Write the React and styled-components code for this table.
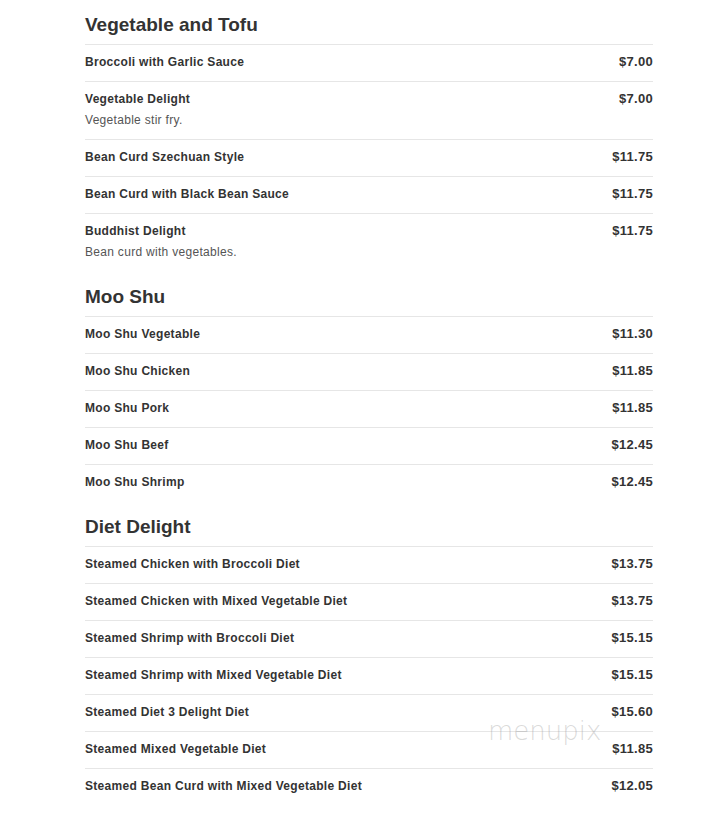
import React from "react";
import styled, { createGlobalStyle } from "styled-components";

const Global = createGlobalStyle`
  html, body { margin: 0; padding: 0; background: #fff; }
  body { font-family: "Liberation Sans", Arial, sans-serif; color: #333; }
`;

const Page = styled.div`
  position: relative;
  width: 721px;
  min-height: 815px;
  box-sizing: border-box;
  padding: 0 68px 12px 85px;
`;

const Section = styled.section`
  display: flex;
  flex-direction: column;
`;

const Heading = styled.h2`
  margin: 0;
  padding: ${(p) => (p.$first ? "14px" : "15px")} 0 0;
  height: ${(p) => (p.$first ? "30px" : "30px")};
  font-size: 19px;
  line-height: 22px;
  font-weight: bold;
  color: #333;
  border-bottom: 1px solid #e6e6e6;
`;

const Row = styled.div`
  display: flex;
  justify-content: space-between;
  align-items: flex-start;
  padding: 10px 0 12px 0;
  border-bottom: ${(p) => (p.$last ? "none" : "1px solid #e6e6e6")};
`;

const Info = styled.div`
  display: flex;
  flex-direction: column;
  gap: 7px;
`;

const Name = styled.div`
  font-size: 12px;
  line-height: 14px;
  font-weight: bold;
  color: #333;
  letter-spacing: 0.3px;
`;

const Desc = styled.div`
  font-size: 12px;
  line-height: 14px;
  color: #555;
  letter-spacing: 0.3px;
`;

const Price = styled.div`
  font-size: 13px;
  line-height: 14px;
  font-weight: bold;
  color: #333;
  letter-spacing: 0.3px;
`;

const Watermark = styled.div`
  position: absolute;
  left: 488px;
  top: 716px;
  font-family: "DejaVu Sans", sans-serif;
  font-size: 26px;
  font-weight: 200;
  color: rgba(150, 150, 150, 0.35);
  pointer-events: none;
`;

const data = [
  {
    title: "Vegetable and Tofu",
    items: [
      ["Broccoli with Garlic Sauce", "$7.00"],
      ["Vegetable Delight", "$7.00", "Vegetable stir fry."],
      ["Bean Curd Szechuan Style", "$11.75"],
      ["Bean Curd with Black Bean Sauce", "$11.75"],
      ["Buddhist Delight", "$11.75", "Bean curd with vegetables."],
    ],
  },
  {
    title: "Moo Shu",
    items: [
      ["Moo Shu Vegetable", "$11.30"],
      ["Moo Shu Chicken", "$11.85"],
      ["Moo Shu Pork", "$11.85"],
      ["Moo Shu Beef", "$12.45"],
      ["Moo Shu Shrimp", "$12.45"],
    ],
  },
  {
    title: "Diet Delight",
    items: [
      ["Steamed Chicken with Broccoli Diet", "$13.75"],
      ["Steamed Chicken with Mixed Vegetable Diet", "$13.75"],
      ["Steamed Shrimp with Broccoli Diet", "$15.15"],
      ["Steamed Shrimp with Mixed Vegetable Diet", "$15.15"],
      ["Steamed Diet 3 Delight Diet", "$15.60"],
      ["Steamed Mixed Vegetable Diet", "$11.85"],
      ["Steamed Bean Curd with Mixed Vegetable Diet", "$12.05"],
    ],
  },
];

export default function App() {
  return (
    <>
      <Global />
      <Page>
        {data.map((s, si) => (
          <Section key={s.title}>
            <Heading $first={si === 0}>{s.title}</Heading>
            {s.items.map(([n, p, d], i) => (
              <Row key={n} $last={i === s.items.length - 1}>
                <Info>
                  <Name>{n}</Name>
                  {d && <Desc>{d}</Desc>}
                </Info>
                <Price>{p}</Price>
              </Row>
            ))}
          </Section>
        ))}
        <Watermark>menupix</Watermark>
      </Page>
    </>
  );
}
